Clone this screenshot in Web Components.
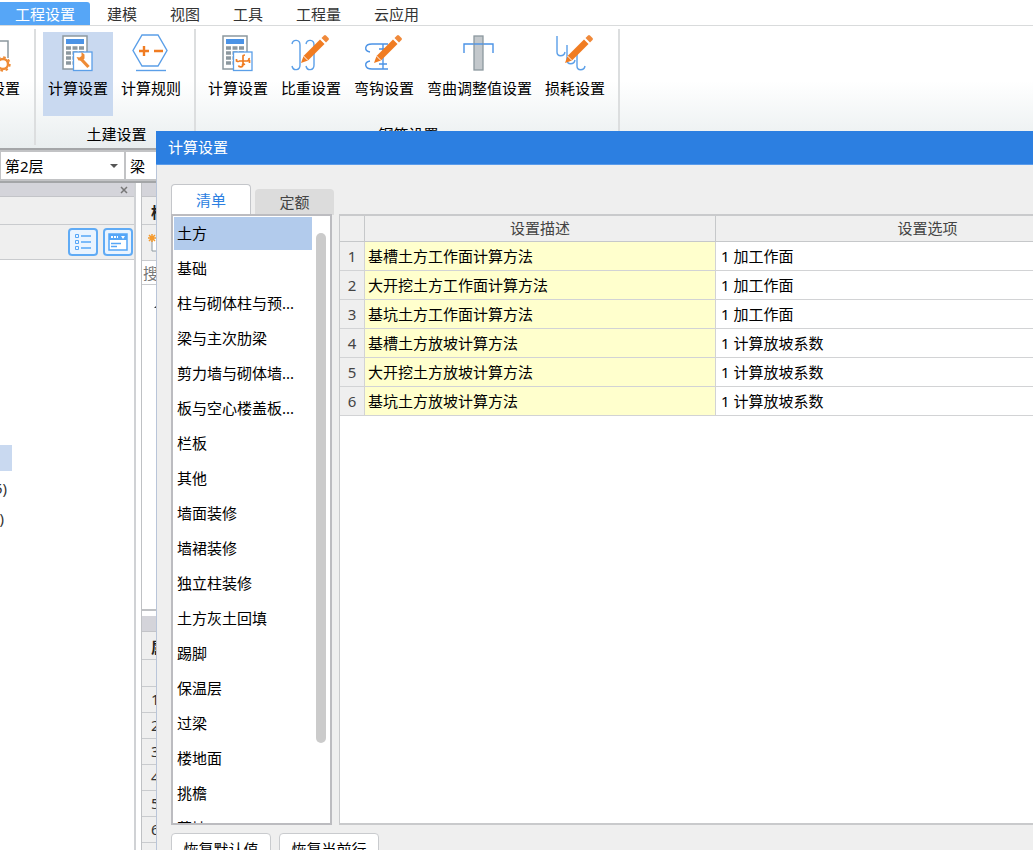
<!DOCTYPE html>
<html lang="zh-CN">
<head>
<meta charset="utf-8">
<title>计算设置</title>
<style>
html, body { height: 100%; margin: 0; }
body { overflow: hidden; background: #fff; color: #000; font: 15px/20px "Noto Sans", "Noto Sans CJK SC", sans-serif; }
</style>
</head>
<body>
<app-shell></app-shell>
<script>
const define = (name, html, setup) => {
  const t = document.createElement('template');
  t.innerHTML = '<style>*{box-sizing:border-box}button,select,input{font:inherit;color:inherit;margin:0}</style>' + html;
  customElements.define(name, class extends HTMLElement {
    constructor() {
      super();
      this.attachShadow({ mode: 'open' }).append(t.content.cloneNode(true));
    }
    connectedCallback() { if (setup) setup(this, this.shadowRoot); }
  });
};

const pencil = '<path d="M9 29l2.500-7L28 5.500l4.500 4.500L16 26.500z" fill="#f07c22"/><path d="M29.500 4l2.500-2.500q1-1 2 0L36.500 4q1 1 0 2L34 8.500z" fill="#f0893a"/><path d="M11.500 22l4.500 4.500" stroke="#fff"/>';
const calc = '<rect x="4" y="2" width="24" height="33" fill="#fff" stroke="#8c989f" stroke-width="1.500"/><rect x="7" y="5" width="18" height="5" fill="#4b93e6"/><path d="M7 14h18M7 19h18M7 24h18M7 29h18" stroke="#8c989f" stroke-width="3.700" stroke-dasharray="5 1.500"/><rect x="14.500" y="18" width="18.500" height="18.500" fill="#fff" stroke="#5b9fe8" stroke-width="1.300"/>';
const icons = {
  calc: calc + '<path d="M22 25l7.500 8" stroke="#ef8b35" stroke-width="3.200"/><path d="M17.500 23l2 3.500h4l2-2v-4l-3-2.500v4l-2 1.500z" fill="#ef8b35"/>',
  rule: '<path d="M10 1h16l9 15.500-9 15.500H10L1 16.500z" fill="none" stroke="#5b9fe8" stroke-width="1.400"/><path d="M7 17h10M12 12v10M22 17h9" stroke="#f07c22" stroke-width="2.400"/><path d="M4 36.500h30" stroke="#5b9fe8" stroke-width="1.400"/>',
  rebar: calc + '<path d="M24 22v8.500c0 3-4 3-4.500 1M24 22q0-1 2-1M17.500 25v2q2 1 3 0h8q2-1 1.500-3M30.500 26v3M26 30q-2 1-3 0" stroke="#f07c22" stroke-width="1.700" fill="none"/>',
  weight: '<g fill="none" stroke="#5b9fe8" stroke-width="1.400"><path d="M0 10c1-5 8-5 8 1v20c0 6-7 6-8 1M14 10c1-5 8-5 8 1v20c0 6-7 6-8 1"/></g>' + pencil,
  hook: '<path d="M23 10H7C-1 10-1 17 5 18M23 35H7c-8 0-8-7-2-8M18 10v25M14 15h8M14 30h8" fill="none" stroke="#4b93e6" stroke-width="1.400"/>' + pencil,
  bend: '<path d="M3 19v-9h29v9" fill="none" stroke="#4b93e6" stroke-width="1.400"/><rect x="13" y="2" width="9" height="34" fill="#c3c8cc" stroke="#8c989f" stroke-width="1.300"/><path d="M13 10h9" stroke="#4b93e6" stroke-width="1.400"/>',
  loss: '<path d="M1 2v16c0 5 7 5 8 0M11 11v15c0 5 7 5 8 0M21 19v13c0 5 7 5 8 0" fill="none" stroke="#5b9fe8" stroke-width="1.400"/>' + pencil,
  gear: '<path d="M5 7h17v17M5 7v26" fill="none" stroke="#8c989f" stroke-width="1.500"/><circle cx="17" cy="30" r="5" fill="#fff" stroke="#ef8b35" stroke-width="2.400"/><circle cx="17" cy="30" r="6.800" fill="none" stroke="#ef8b35" stroke-width="1.800" stroke-dasharray="2.600 2.740"/>'
};

define('ribbon-tab', `<style>
:host{display:block}
button{display:block;height:23px;padding:0 16px;border:0;background:none;line-height:22px;color:#333}
:host([active]) button{background:#56a6f7;color:#fff;border-radius:0 3px 0 0;padding:0 15px}
</style><button type="button"><slot></slot></button>`);

define('ribbon-button', `<style>
:host{display:block}
button{display:flex;flex-direction:column;align-items:center;height:84px;padding:2px 5px 0;border:0;background:none;white-space:nowrap}
:host([active]) button{background:#c9d9f0}
svg{width:40px;height:38px;overflow:visible}
span{margin-top:6px}
</style><button type="button"><svg viewBox="-1 0 40 38" aria-hidden="true"></svg><span><slot></slot></span></button>`,
(el, r) => { r.querySelector('svg').innerHTML = icons[el.getAttribute('icon')]; });

define('ribbon-group', `<style>
:host{display:flex;flex-direction:column;justify-content:space-between;padding:0 4px 1px 7px;border-right:2px solid #dcdedf;margin:3px 0}
.items{display:flex;gap:3px;padding:3px 4px 0 0}
.name{text-align:center;height:20px}
:host([clipped]){width:36px;overflow:hidden;padding:0}
:host([clipped]) .items{justify-content:flex-end}
</style><div class="items"><slot></slot></div><div class="name"><slot name="name"></slot></div>`);

define('ribbon-bar', `<style>
:host{display:block}
nav{display:flex;align-items:flex-end;gap:1px;height:26px;border-bottom:1px solid #d9dbdc}
.groups{display:flex;height:122px;background:linear-gradient(#fff 45%,#e9eeef)}
</style><nav>
<ribbon-tab active>工程设置</ribbon-tab><ribbon-tab>建模</ribbon-tab><ribbon-tab>视图</ribbon-tab><ribbon-tab>工具</ribbon-tab><ribbon-tab>工程量</ribbon-tab><ribbon-tab>云应用</ribbon-tab>
</nav><div class="groups">
<ribbon-group clipped><ribbon-button icon="gear">设置</ribbon-button></ribbon-group>
<ribbon-group><ribbon-button icon="calc" active>计算设置</ribbon-button><ribbon-button icon="rule">计算规则</ribbon-button><span slot="name">土建设置</span></ribbon-group>
<ribbon-group><ribbon-button icon="rebar">计算设置</ribbon-button><ribbon-button icon="weight">比重设置</ribbon-button><ribbon-button icon="hook">弯钩设置</ribbon-button><ribbon-button icon="bend">弯曲调整值设置</ribbon-button><ribbon-button icon="loss">损耗设置</ribbon-button><span slot="name">钢筋设置</span></ribbon-group>
</div>`);

define('floor-bar', `<style>
:host{display:flex;gap:2px;height:35px;padding:2px 1px;border:solid #a4a6a8;border-width:2px 0;background:#c2c3c5}
label{position:relative;display:block}
select{appearance:none;display:block;height:27px;width:123px;padding:0 4px;border:0;border-radius:0;background:#fff}
.arrow::after{content:"";position:absolute;right:6px;top:12px;border:4px solid transparent;border-top-color:#555;border-bottom:0}
</style><label class="arrow"><select aria-label="楼层"><option>第2层</option></select></label><label><select aria-label="构件类型"><option>梁</option></select></label>`);

define('nav-panel', `<style>
:host{display:flex;flex-direction:column;width:136px;border-right:2px solid #d0d2d5;background:#fff}
header{display:flex;justify-content:flex-end;align-items:center;height:14px;background:#d4d4da;border-bottom:1px solid #c3c4c8}
header button{border:0;background:none;padding:0;width:20px;height:13px;display:grid;place-items:center}
.title{height:28px;background:#efefef;border-bottom:1px solid #c9cbce}
.tools{display:flex;justify-content:flex-end;gap:5px;align-items:center;height:35px;padding-right:1px;background:#efefef;border-bottom:1px solid #c9cbce}
.tools button{width:30px;height:28px;padding:0;border:2px solid #60abf5;border-radius:4px;background:#eaf4ff;display:grid;place-items:center}
ul{list-style:none;margin:0;padding:185px 0 0}
li{width:7px;height:30px;line-height:30px;display:flex;justify-content:flex-end;overflow:hidden;white-space:nowrap;color:#333}
li.on{width:12px;height:28px;border-bottom:2px solid #fff;background:#c9d9f0}
li:last-child{width:4px}
</style><header><button type="button" aria-label="关闭"><svg width="8" height="8"><path d="M1 1l6 6M7 1L1 7" stroke="#777" stroke-width="1.500"/></svg></button></header>
<div class="title"></div>
<div class="tools">
<button type="button" aria-label="列表"><svg width="18" height="18" fill="none" stroke="#56a6f7"><path d="M1.500 1.500h3v3h-3zM1.500 7.500h3v3h-3zM1.500 13.500h3v3h-3z"/><path d="M7 3h10M7 9h10M7 15h10" stroke-width="1.500"/></svg></button>
<button type="button" aria-label="窗口"><svg width="20" height="18"><rect x="1" y="1" width="18" height="16" fill="#fff" stroke="#56a6f7" stroke-width="1.500"/><path d="M1 1h18v6H1z" fill="#56a6f7"/><path d="M3 4h2M6 4h2M9 4h1" stroke="#fff" stroke-width="2"/><path d="M13 3h4l-2 3z" fill="#fff"/><path d="M3 10.500h10M3 13.500h6" stroke="#56a6f7" stroke-width="1.500"/></svg></button>
</div>
<ul><li class="on"></li><li>5)</li><li>)</li></ul>`);

define('component-panel', `<style>
:host{display:flex;flex-direction:column;flex:1;min-width:0;margin-left:5px;border-left:1px solid #bfc1c4}
div,table{flex:none}
.cap{height:14px;background:#d4d4da;border-bottom:1px solid #c3c4c8}
.title{height:28px;padding:5px 0 0 9px;line-height:20px;font-weight:700;color:#222;background:#efefef;border-bottom:1px solid #c9cbce}
.tools{height:36px;padding:9px 6px;background:#efefef;border-bottom:1px solid #c9cbce}
.search{height:24px;padding:1px;line-height:22px;color:#777;border-bottom:1px solid #c9cbce}
.tree{height:326px;padding:17px 12px;border-bottom:2px solid #bfc1c4}
.gap{height:5px}
.tree svg,.tools svg{display:block}
.cap.low{height:16px}
table{border-collapse:collapse;width:100%}
td{height:26px;padding:0 0 0 9px;line-height:20px;color:#333;background:#efefef;border-bottom:1px solid #c9cbce}
</style><div class="cap"></div><div class="title">构</div>
<div class="tools"><svg width="16" height="18"><path d="M4 6v11h11V4H9" fill="#fff" stroke="#8c989f"/><path d="M4 0v8M0 4h8M1 1l6 6M7 1L1 7" stroke="#f59a2d" stroke-width="1.500"/></svg></div>
<div class="search">搜</div>
<div class="tree"><svg width="8" height="8"><path d="M6 0v6H0z" fill="#333"/></svg></div><div class="gap"></div>
<div class="cap low"></div><div class="title">属</div>
<table><tbody><tr><td></td></tr></tbody></table>`,
(el, r) => {
  const body = r.querySelector('tbody');
  if (body.rows.length > 1) return;
  for (let i = 1; i <= 6; i++) body.insertRow().insertCell().textContent = i;
  body.insertRow().insertCell();
});

define('category-list', `<style>
:host{display:block;position:relative;width:161px;border:2px solid #bcbcc0;background:#fff;overflow:hidden}
ul{list-style:none;margin:0;padding:1px 18px 0 1px}
li{height:35px}
button{display:block;width:100%;height:33px;padding:0 3px 2px;border:0;background:none;text-align:left;white-space:nowrap;overflow:hidden}
li:first-child button{background:#b2cbec}
i{position:absolute;right:4px;top:17px;width:10px;height:84%;border-radius:5px;background:#cbcbcb}
</style><ul></ul><i></i>`,
(el, r) => {
  r.querySelector('ul').innerHTML = ['土方','基础','柱与砌体柱与预...','梁与主次肋梁','剪力墙与砌体墙...','板与空心楼盖板...','栏板','其他','墙面装修','墙裙装修','独立柱装修','土方灰土回填','踢脚','保温层','过梁','楼地面','挑檐','幕墙']
    .map(t => `<li><button type="button">${t}</button></li>`).join('');
});

define('settings-table', `<style>
:host{display:block;flex:1;min-width:0;overflow:hidden;border:solid #c9cacc;border-width:2px 0 2px 1px;background:#fff}
table{border-collapse:separate;border-spacing:0;table-layout:fixed;width:800px}
th,td{padding:0 4px 1px;text-align:left;font-weight:400;border:solid #d2d3d5;border-width:0 1px 1px 0;height:29px}
td{padding-left:3px}
thead th{height:26px;text-align:center;color:#444;background:#efefef;border-color:#c6c8ca}
tbody th{text-align:center;padding:0 0 1px;color:#444;background:#efefef}
td:nth-child(2){background:#ffffcd}
td:nth-child(3){padding-left:5px}
.n{width:25px}.d{width:351px}
</style><table><colgroup><col class="n"><col class="d"><col></colgroup><thead><tr><th></th><th>设置描述</th><th>设置选项</th></tr></thead><tbody></tbody></table>`,
(el, r) => {
  r.querySelector('tbody').innerHTML = [['基槽土方工作面计算方法','1 加工作面'],['大开挖土方工作面计算方法','1 加工作面'],['基坑土方工作面计算方法','1 加工作面'],['基槽土方放坡计算方法','1 计算放坡系数'],['大开挖土方放坡计算方法','1 计算放坡系数'],['基坑土方放坡计算方法','1 计算放坡系数']]
    .map((d, i) => `<tr><th>${i + 1}</th><td>${d[0]}</td><td>${d[1]}</td></tr>`).join('');
});

define('settings-dialog', `<style>
:host{position:absolute;left:156px;top:131px;right:0;bottom:-24px;display:flex;flex-direction:column;background:#efefef;border-left:1px solid #b9c5d9}
header{height:34px;padding:0 12px;margin-left:-1px;line-height:33px;background:#2c7fe1;color:#fff;border-bottom:1px solid #5a9bea}
.tabs{display:flex;align-items:flex-end;gap:4px;padding:19px 14px 0;height:50px}
.tabs button{width:79px;height:26px;padding:0;border:0;border-radius:4px 4px 0 0;background:#dcdcdc;color:#444;line-height:25px}
.tabs .on{width:80px;height:31px;background:#fff;border:1px solid #c4c6ca;border-bottom:0;color:#2c7fe1;line-height:30px}
.panes{flex:1;min-height:0;display:flex;gap:7px;margin-left:14px;margin-top:-1px}
footer{display:flex;gap:8px;padding:8px 14px 10px}
footer button{width:100px;height:31px;padding:0;background:#fff;border:1px solid #c9cbce;border-radius:4px}
</style><header>计算设置</header>
<div class="tabs"><button type="button" class="on">清单</button><button type="button">定额</button></div>
<div class="panes"><category-list></category-list><settings-table></settings-table></div>
<footer><button type="button">恢复默认值</button><button type="button">恢复当前行</button></footer>`);

define('app-shell', `<style>
:host{display:flex;flex-direction:column;position:relative;height:100%;overflow:hidden}
main{display:flex;flex:1;min-height:0}
</style><ribbon-bar></ribbon-bar><floor-bar></floor-bar><main><nav-panel></nav-panel><component-panel></component-panel></main><settings-dialog></settings-dialog>`);
</script>
</body>
</html>
